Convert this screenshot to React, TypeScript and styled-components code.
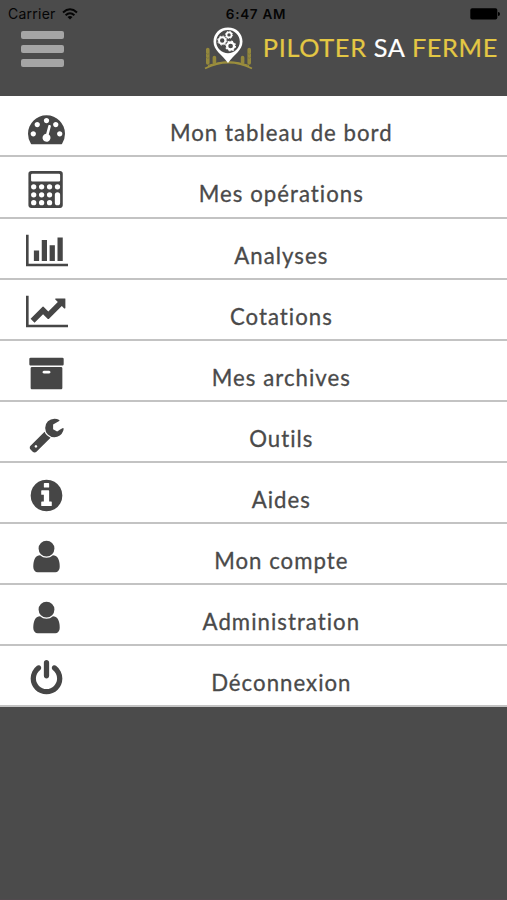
import React from "react";
import styled, { createGlobalStyle } from "styled-components";

const GlobalStyle = createGlobalStyle`
  * { box-sizing: border-box; }
  body { margin: 0; background: #4b4b4b; }
`;

const Screen = styled.div`
  width: 100%;
  min-height: 900px;
  background: #4b4b4b;
  border-bottom: 1px solid #514a4e;
  font-family: Lato, sans-serif;
`;

const Header = styled.header`
  height: 96.4px;
  overflow: hidden;
`;

const StatusBar = styled.div`
  display: grid;
  grid-template-columns: 1fr auto 1fr;
  align-items: center;
  height: 26px;
  padding: 1px 7px 0 8px;
  color: #050505;
  font: 14px/20px Inter, sans-serif;
`;

const Carrier = styled.div`
  display: flex;
  align-items: center;
  gap: 6px;
  letter-spacing: 0.25px;
`;

const Clock = styled.div`
  padding-left: 4px;
  font-size: 13.5px;
  font-weight: 600;
  letter-spacing: 0.7px;
`;

const BatterySlot = styled.div`
  display: flex;
  justify-content: flex-end;
`;

const NavBar = styled.div`
  display: flex;
  justify-content: space-between;
  height: 48px;
  padding: 0 9px 0 21px;
`;

const MenuButton = styled.button`
  display: flex;
  flex-direction: column;
  gap: 6px;
  width: 43px;
  padding: 5px 0 0;
  border: 0;
  background: none;
`;

const MenuBar = styled.span`
  height: 8px;
  border-radius: 2px;
  background: #a5a5a5;
`;

const Brand = styled.div`
  display: flex;
  gap: 10px;
`;

const BrandName = styled.div`
  padding-top: 5px;
  color: #e3c744;
  font-size: 25.3px;
  line-height: 32px;
  letter-spacing: 0.65px;
  white-space: nowrap;
  -webkit-text-stroke: 0.2px currentColor;
`;

const BrandAccent = styled.span`
  color: #fff;
`;

const Menu = styled.nav`
  display: grid;
  grid-template-rows: repeat(10, 61.1px);
  background: #fff;
`;

const MenuRow = styled.a`
  display: grid;
  grid-template-columns: 93.2px 1fr;
  border-bottom: 2px solid #c3c3c3;
  color: #4a4a4a;
  text-decoration: none;
`;

const IconCell = styled.span`
  display: flex;
  justify-content: center;
  padding-top: 13.8px;
`;

const Label = styled.span`
  padding: 23px 37.5px 0 0;
  font-size: 22.2px;
  font-weight: 400;
  line-height: 28px;
  letter-spacing: 1.03px;
  text-align: center;
  white-space: nowrap;
  -webkit-text-stroke: 0.3px #4a4a4a;
`;

const dot = (x: number, y: number) =>
  `M${x - 128} ${y}a128 128 0 1 0 256 0a128 128 0 1 0 -256 0z`;

const USER =
  "M1536 1399q0 109-62.5 187t-150.5 78h-854q-88 0-150.5-78t-62.5-187q0-85 8.5-160.5t31.5-152 58.5-131 94-89 134.5-34.5q131 128 313 128t313-128q76 0 134.5 34.5t94 89 58.5 131 31.5 152 8.5 160.5zm-256-887q0 159-112.5 271.5t-271.5 112.5-271.5-112.5-112.5-271.5 112.5-271.5 271.5-112.5 271.5 112.5 112.5 271.5z";

const CALCULATOR =
  "M148 0h1408q52 0 90 38t38 90v1536q0 52-38 90t-90 38h-1408q-52 0-90-38t-38-90v-1536q0-52 38-90t90-38z" +
  "M212 128q-64 0-64 64v256q0 64 64 64h1280q64 0 64-64v-256q0-64-64-64z" +
  [276, 660, 1044].map((x) => [768, 1152, 1536].map((y) => dot(x, y)).join("")).join("") +
  dot(1428, 768) +
  "M1300 1152v384a128 128 0 0 0 256 0v-384a128 128 0 0 0-256 0z";

interface Item {
  label: string;
  path: string;
  wide?: boolean;
}

const items: Item[] = [
  {
    label: "Mon tableau de bord",
    path: "M384 1152q0-53-37.5-90.5t-90.5-37.5-90.5 37.5-37.5 90.5 37.5 90.5 90.5 37.5 90.5-37.5 37.5-90.5zm192-448q0-53-37.5-90.5t-90.5-37.5-90.5 37.5-37.5 90.5 37.5 90.5 90.5 37.5 90.5-37.5 37.5-90.5zm428 481l101-382q6-26-7.5-48.5t-38.5-29.5-48 6.5-30 39.5l-101 382q-60 5-107 43.5t-63 98.5q-20 77 20 146t117 89 146-20 89-117q16-60-6-117t-72-91zm660-33q0-53-37.5-90.5t-90.5-37.5-90.5 37.5-37.5 90.5 37.5 90.5 90.5 37.5 90.5-37.5 37.5-90.5zm-640-640q0-53-37.5-90.5t-90.5-37.5-90.5 37.5-37.5 90.5 37.5 90.5 90.5 37.5 90.5-37.5 37.5-90.5zm448 192q0-53-37.5-90.5t-90.5-37.5-90.5 37.5-37.5 90.5 37.5 90.5 90.5 37.5 90.5-37.5 37.5-90.5zm320 448q0 261-141 483-19 29-54 29h-1402q-35 0-54-29-141-221-141-483 0-182 71-348t191-286 286-191 348-71 348 71 286 191 191 286 71 348z",
  },
  { label: "Mes opérations", path: CALCULATOR },
  {
    label: "Analyses",
    wide: true,
    path: "M640 896v512h-256v-512h256zm384-512v1024h-256v-1024h256zm1024 1152v128h-2048v-1536h128v1408h1920zm-640-896v768h-256v-768h256zm384-384v1152h-256v-1152h256z",
  },
  {
    label: "Cotations",
    wide: true,
    path: "M2048 1536v128h-2048v-1536h128v1408h1920zm-128-1248v435q0 21-19.5 29.5t-35.5-7.5l-121-121-633 633q-10 10-23 10t-23-10l-233-233-416 416-192-192 585-585q10-10 23-10t23 10l233 233 464-464-121-121q-16-16-7.5-35.5t29.5-19.5h435q14 0 23 9t9 23z",
  },
  {
    label: "Mes archives",
    path: "M1088 832q0-26-19-45t-45-19h-256q-26 0-45 19t-19 45 19 45 45 19h256q26 0 45-19t19-45zm576-192v960q0 26-19 45t-45 19h-1408q-26 0-45-19t-19-45v-960q0-26 19-45t45-19h1408q26 0 45 19t19 45zm64-448v256q0 26-19 45t-45 19h-1536q-26 0-45-19t-19-45v-256q0-26 19-45t45-19h1536q26 0 45 19t19 45z",
  },
  {
    label: "Outils",
    path: "M448 1472q0-26-19-45t-45-19-45 19-19 45 19 45 45 19 45-19 19-45zm644-420l-682 682q-37 37-90 37-52 0-91-37l-106-108q-38-36-38-90 0-53 38-91l681-681q39 98 114.5 173.5t173.5 114.5zm634-435q0 39-23 106-47 134-164.5 217.5t-258.5 83.5q-185 0-316.5-131.5t-131.5-316.5 131.5-316.5 316.5-131.5q58 0 121.5 16.5t107.5 46.5q16 11 16 28t-16 28l-293 169v224l193 107q5-3 79-48.5t135.5-81 70.5-35.5q15 0 23.5 10t8.5 25z",
  },
  {
    label: "Aides",
    path: "M1152 1376v-160q0-14-9-23t-23-9h-96v-512q0-14-9-23t-23-9h-320q-14 0-23 9t-9 23v160q0 14 9 23t23 9h96v320h-96q-14 0-23 9t-9 23v160q0 14 9 23t23 9h448q14 0 23-9t9-23zm-128-896v-160q0-14-9-23t-23-9h-192q-14 0-23 9t-9 23v160q0 14 9 23t23 9h192q14 0 23-9t9-23zm640 416q0 209-103 385.5t-279.5 279.5-385.5 103-385.5-103-279.5-279.5-103-385.5 103-385.5 279.5-279.5 385.5-103 385.5 103 279.5 279.5 103 385.5z",
  },
  { label: "Mon compte", path: USER },
  { label: "Administration", path: USER },
  {
    label: "Déconnexion",
    path: "M1664 896q0 156-61 298t-164 245-245 164-298 61-298-61-245-164-164-245-61-298q0-182 80.5-343t226.5-270q43-32 95.5-25t83.5 50q32 42 24.5 94.5t-49.5 84.5q-98 74-151.5 181t-53.5 228q0 104 40.5 198.5t109.5 163.5 163.5 109.5 198.5 40.5 198.5-40.5 163.5-109.5 109.5-163.5 40.5-198.5q0-121-53.5-228t-151.5-181q-42-32-49.5-84.5t24.5-94.5q31-43 84-50t95 25q146 109 226.5 270t80.5 343zm-640-768v640q0 52-38 90t-90 38-90-38-38-90v-640q0-52 38-90t90-38 90 38 38 90z",
  },
];

const MenuIcon = ({ path, wide }: { path: string; wide?: boolean }) => (
  <svg
    width={wide ? 42 : 37}
    height={37}
    viewBox={wide ? "0 0 2048 1792" : "0 0 1792 1792"}
    fill="#464646"
    fillRule="evenodd"
  >
    <path d={path} />
  </svg>
);

const WifiIcon = () => (
  <svg width="16" height="12" viewBox="0 0 16 12" fill="none" stroke="#050505" strokeWidth="2">
    <path d="M1 4.4Q8 -1.8 15 4.4" />
    <path d="M3.6 7.2Q8 3.2 12.4 7.2" />
    <path d="M5.5 9Q8 6.9 10.5 9L8 11.6z" fill="#050505" stroke="none" />
  </svg>
);

const BatteryIcon = () => (
  <svg width="30" height="12" viewBox="0 0 30 12">
    <rect x="0.3" y="0.3" width="27" height="11.2" rx="1.8" fill="#000" />
    <path d="M28 4q2 .2 2 2t-2 2z" fill="#000" />
  </svg>
);

const Logo = () => (
  <svg width="49" height="44" viewBox="0 0 49 44" fill="none">
    <g stroke="#9c8f3d" strokeWidth="1.8">
      <path d="M1 42.5Q24.500 30.500 48 42.5" />
      <path d="M4 39.500Q24.500 32 45 39.500" strokeWidth="1.2" />
    </g>
    <g stroke="#94883c" strokeWidth="3.6" strokeLinecap="round">
      <path d="M3.800 23.500v13.500M45.200 23.500v13.500" />
      <path d="M10.400 31.500v5M38.600 31.500v5" />
    </g>
    <g stroke="#6f6a40" strokeWidth="0.6">
      <path d="M2 27l1.800 1.500 1.800-1.500M2 31l1.800 1.500 1.800-1.500M43.400 27l1.800 1.500 1.800-1.500M43.400 31l1.800 1.500 1.800-1.500" />
    </g>
    <path
      fill="#fff"
      fillRule="evenodd"
      d="M24 1.500C15.500 1.500 9.500 7.700 9.500 15.500c0 9 8.500 13 14.500 21.500C30 28.500 38.500 24.500 38.500 15.500 38.500 7.700 32.500 1.500 24 1.500zM24 4a11.800 11.600 0 1 1 0 23.200a11.800 11.600 0 1 1 0-23.200z"
    />
    <g stroke="#fff">
      <circle cx="18.200" cy="14.500" r="3.200" strokeWidth="2" />
      <circle cx="18.200" cy="14.500" r="4.500" strokeWidth="1" strokeDasharray="1.800 1.730" />
      <circle cx="25" cy="8.900" r="2.500" strokeWidth="1.600" />
      <circle cx="25" cy="8.900" r="3.600" strokeWidth="0.900" strokeDasharray="1.400 1.430" />
      <circle cx="26.600" cy="20" r="3.500" strokeWidth="2.300" />
      <circle cx="26.600" cy="20" r="4.900" strokeWidth="1.100" strokeDasharray="1.900 1.950" />
    </g>
  </svg>
);

export default function App() {
  return (
    <>
      <GlobalStyle />
      <Screen>
        <Header>
          <StatusBar>
            <Carrier>
              Carrier
              <WifiIcon />
            </Carrier>
            <Clock>6:47 AM</Clock>
            <BatterySlot>
              <BatteryIcon />
            </BatterySlot>
          </StatusBar>
          <NavBar>
            <MenuButton aria-label="Menu">
              <MenuBar />
              <MenuBar />
              <MenuBar />
            </MenuButton>
            <Brand>
              <Logo />
              <BrandName>
                PILOTER <BrandAccent>SA</BrandAccent> FERME
              </BrandName>
            </Brand>
          </NavBar>
        </Header>
        <Menu>
          {items.map((item) => (
            <MenuRow key={item.label}>
              <IconCell>
                <MenuIcon path={item.path} wide={item.wide} />
              </IconCell>
              <Label>{item.label}</Label>
            </MenuRow>
          ))}
        </Menu>
      </Screen>
    </>
  );
}
